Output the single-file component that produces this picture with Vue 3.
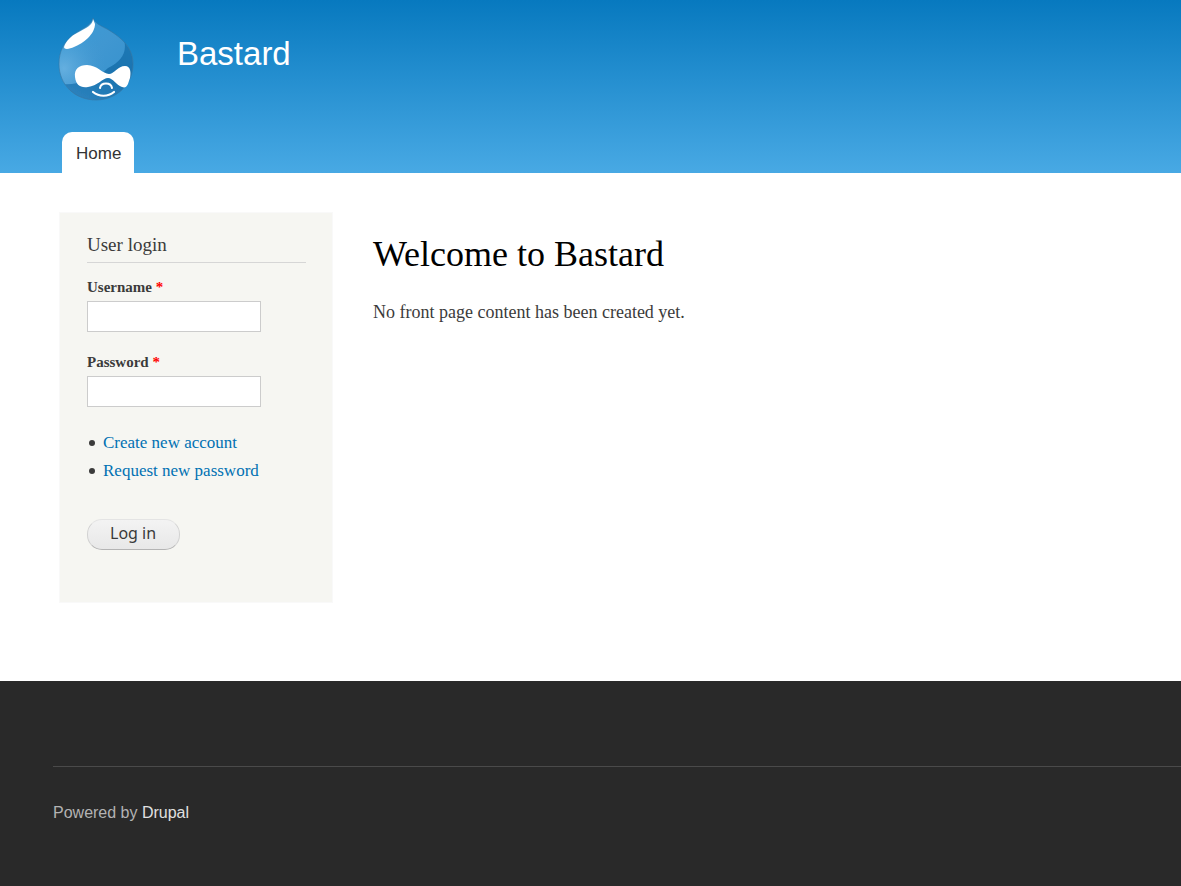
<script setup>
import { ref } from 'vue'

const siteName = 'Bastard'
const username = ref('')
const password = ref('')
</script>

<template>
  <div class="page">
    <header class="header">
      <div class="branding">
        <a href="#" class="logo" aria-label="Home page">
          <svg width="76" height="84" viewBox="0 0 76 84" aria-hidden="true">
            <defs>
              <linearGradient id="drop" x1="0" y1="0" x2="1" y2="1">
                <stop offset="0" stop-color="#3b9cd6" />
                <stop offset="0.45" stop-color="#4097d1" />
                <stop offset="1" stop-color="#3390cc" />
              </linearGradient>
              <linearGradient id="shade" x1="0.9" y1="0" x2="0.3" y2="1">
                <stop offset="0" stop-color="#2179b6" />
                <stop offset="0.5" stop-color="#1a73af" />
                <stop offset="1" stop-color="#2c82bd" />
              </linearGradient>
              <radialGradient id="glow" cx="0.08" cy="0.6" r="0.55">
                <stop offset="0" stop-color="#75b9e5" stop-opacity="0.7" />
                <stop offset="1" stop-color="#4399d2" stop-opacity="0" />
              </radialGradient>
              <filter id="soft" x="-20%" y="-20%" width="140%" height="140%">
                <feGaussianBlur stdDeviation="0.6" />
              </filter>
              <clipPath id="body">
                <path d="M35 0C37 5 41 7 49 11C66 21 75 31 75 46C75 67 58 82 38 82C17 82 1 67 1 46C1 33 6 24 15 17C24 10 33 8 35 0Z" />
              </clipPath>
            </defs>
            <g clip-path="url(#body)">
              <rect width="76" height="84" fill="url(#drop)" />
              <rect width="76" height="84" fill="url(#glow)" />
              <path d="M64 16C71 32 65 43 50 50C40 60 20 68 2 66C10 81 27 86 40 84C62 83 78 68 78 48C77 36 71 22 64 16Z" fill="url(#shade)" filter="url(#soft)" />
            </g>
            <path d="M35 0C37 5 41 7 49 11C66 21 75 31 75 46C75 67 58 82 38 82C17 82 1 67 1 46C1 33 6 24 15 17C24 10 33 8 35 0Z" fill="none" stroke="#36739d" stroke-opacity="0.55" />
            <path d="M35 1C35 7 28 10 19 15C13 18 8 23 6 29C6 32 12 31 16 29C21 27 26 24 30 20C34 16 37 11 37 6Z" fill="#fff" filter="url(#soft)" />
            <path d="M17 59C16 51 21 47 29 47C39 47 45 56 51 56C56 56 60 48 67 48C73 48 73 55 72 60C70 66 69 71 64 69C58 67 55 60 50 60C45 60 39 68 30 69C22 70 18 67 17 59Z" fill="#fff" />
            <path d="M42 70C43 64 53 64 54 70" fill="none" stroke="#fff" stroke-width="2" stroke-linecap="round" />
            <path d="M35 74C41 79 50 79 56 74" fill="none" stroke="#fff" stroke-width="2.2" stroke-linecap="round" />
          </svg>
        </a>
        <a href="#" class="site-name">{{ siteName }}</a>
      </div>
      <nav class="menu" aria-label="Main menu">
        <a href="#" class="tab">Home</a>
      </nav>
    </header>

    <div class="main">
      <aside class="sidebar">
        <h2>User login</h2>
        <form @submit.prevent>
          <div class="field">
            <label for="username">Username <span class="required">*</span></label>
            <input id="username" v-model="username" type="text" required />
          </div>
          <div class="field">
            <label for="password">Password <span class="required">*</span></label>
            <input id="password" v-model="password" type="password" required />
          </div>
          <ul class="links">
            <li><a href="#">Create new account</a></li>
            <li><a href="#">Request new password</a></li>
          </ul>
          <button type="submit">Log in</button>
        </form>
      </aside>
      <main class="content">
        <h1>Welcome to {{ siteName }}</h1>
        <p>No front page content has been created yet.</p>
      </main>
    </div>

    <footer class="footer">
      <div class="credit">Powered by <a href="#">Drupal</a></div>
    </footer>
  </div>
</template>

<style>
body {
  margin: 0;
  background: #292929;
}
</style>

<style scoped>
.page {
  display: flex;
  flex-direction: column;
  min-height: 100vh;
  background: #fff;
  color: #3b3b3b;
  font-family: "Liberation Serif", serif;
}

.page * {
  box-sizing: border-box;
}

a {
  text-decoration: none;
}

.header {
  background: linear-gradient(#0779bf, #48a9e4);
  font-family: "Liberation Sans", sans-serif;
}

.branding {
  display: flex;
  align-items: flex-start;
  gap: 43px;
  padding: 18px 58px 30px;
}

.logo,
.logo svg {
  display: block;
}

.site-name {
  padding-top: 16px;
  color: #fff;
  font-size: 33px;
  line-height: 40px;
}

.menu {
  display: flex;
  padding: 0 62px;
}

.tab {
  padding: 3px 13px 0 14px;
  border-radius: 10px 10px 0 0;
  background: #fff;
  color: #333;
  font-size: 17px;
  line-height: 38px;
}

.main {
  display: grid;
  grid-template-columns: 274px 1fr;
  gap: 40px;
  padding: 39px 59px 78px;
}

.sidebar {
  padding: 20px 26px 52px 27px;
  border: 1px solid #f9f9f9;
  background: #f6f6f2;
}

h2 {
  margin: 0 0 14px;
  padding-bottom: 5px;
  border-bottom: 1px solid #d6d6d6;
  font-size: 19px;
  font-weight: 400;
  line-height: 24px;
}

.field {
  display: flex;
  flex-direction: column;
  align-items: flex-start;
  gap: 4px;
  margin-bottom: 20px;
}

label {
  font-size: 15px;
  font-weight: 700;
  line-height: 20px;
}

.required {
  color: #f00;
}

input {
  width: 174px;
  max-width: 100%;
  height: 31px;
  margin: 0;
  padding: 4px;
  border: 1px solid #ccc;
  border-radius: 0;
  background: #fff;
  color: #3b3b3b;
  font-family: inherit;
  font-size: 16px;
}

.links {
  margin: 0 0 34px;
  padding: 2px 0 0 2px;
  list-style: none;
  font-size: 17px;
  line-height: 28px;
}

.links li {
  display: flex;
  align-items: center;
  gap: 8px;
}

.links li::before {
  content: "";
  width: 6px;
  height: 6px;
  border-radius: 50%;
  background: #3b3b3b;
}

.links a {
  color: #0071b3;
}

button {
  display: block;
  height: 31px;
  margin: 0;
  padding: 0 23px 2px 22px;
  border: 1px solid #e4e4e4;
  border-right-color: #d2d2d2;
  border-bottom-color: #b4b4b4;
  border-left-color: #d2d2d2;
  border-radius: 15px;
  background: linear-gradient(#f3f3f3, #e8e8e8);
  color: #3a3a3a;
  font-family: "Noto Sans", sans-serif;
  font-size: 16px;
  line-height: 27px;
}

h1 {
  margin: 0;
  padding-top: 20px;
  color: #000;
  font-size: 36px;
  font-weight: 400;
  line-height: 44px;
}

p {
  margin: 24px 0 0;
  font-size: 18px;
  line-height: 24px;
}

.footer {
  flex: 1;
  padding: 85px 0 60px 53px;
  background: #292929;
  font-family: "Liberation Sans", sans-serif;
}

.credit {
  padding-top: 36px;
  border-top: 1px solid #4a4a4a;
  color: #b3b3b3;
  font-size: 16px;
  line-height: 20px;
}

.credit a {
  color: #e0e0e0;
}
</style>
